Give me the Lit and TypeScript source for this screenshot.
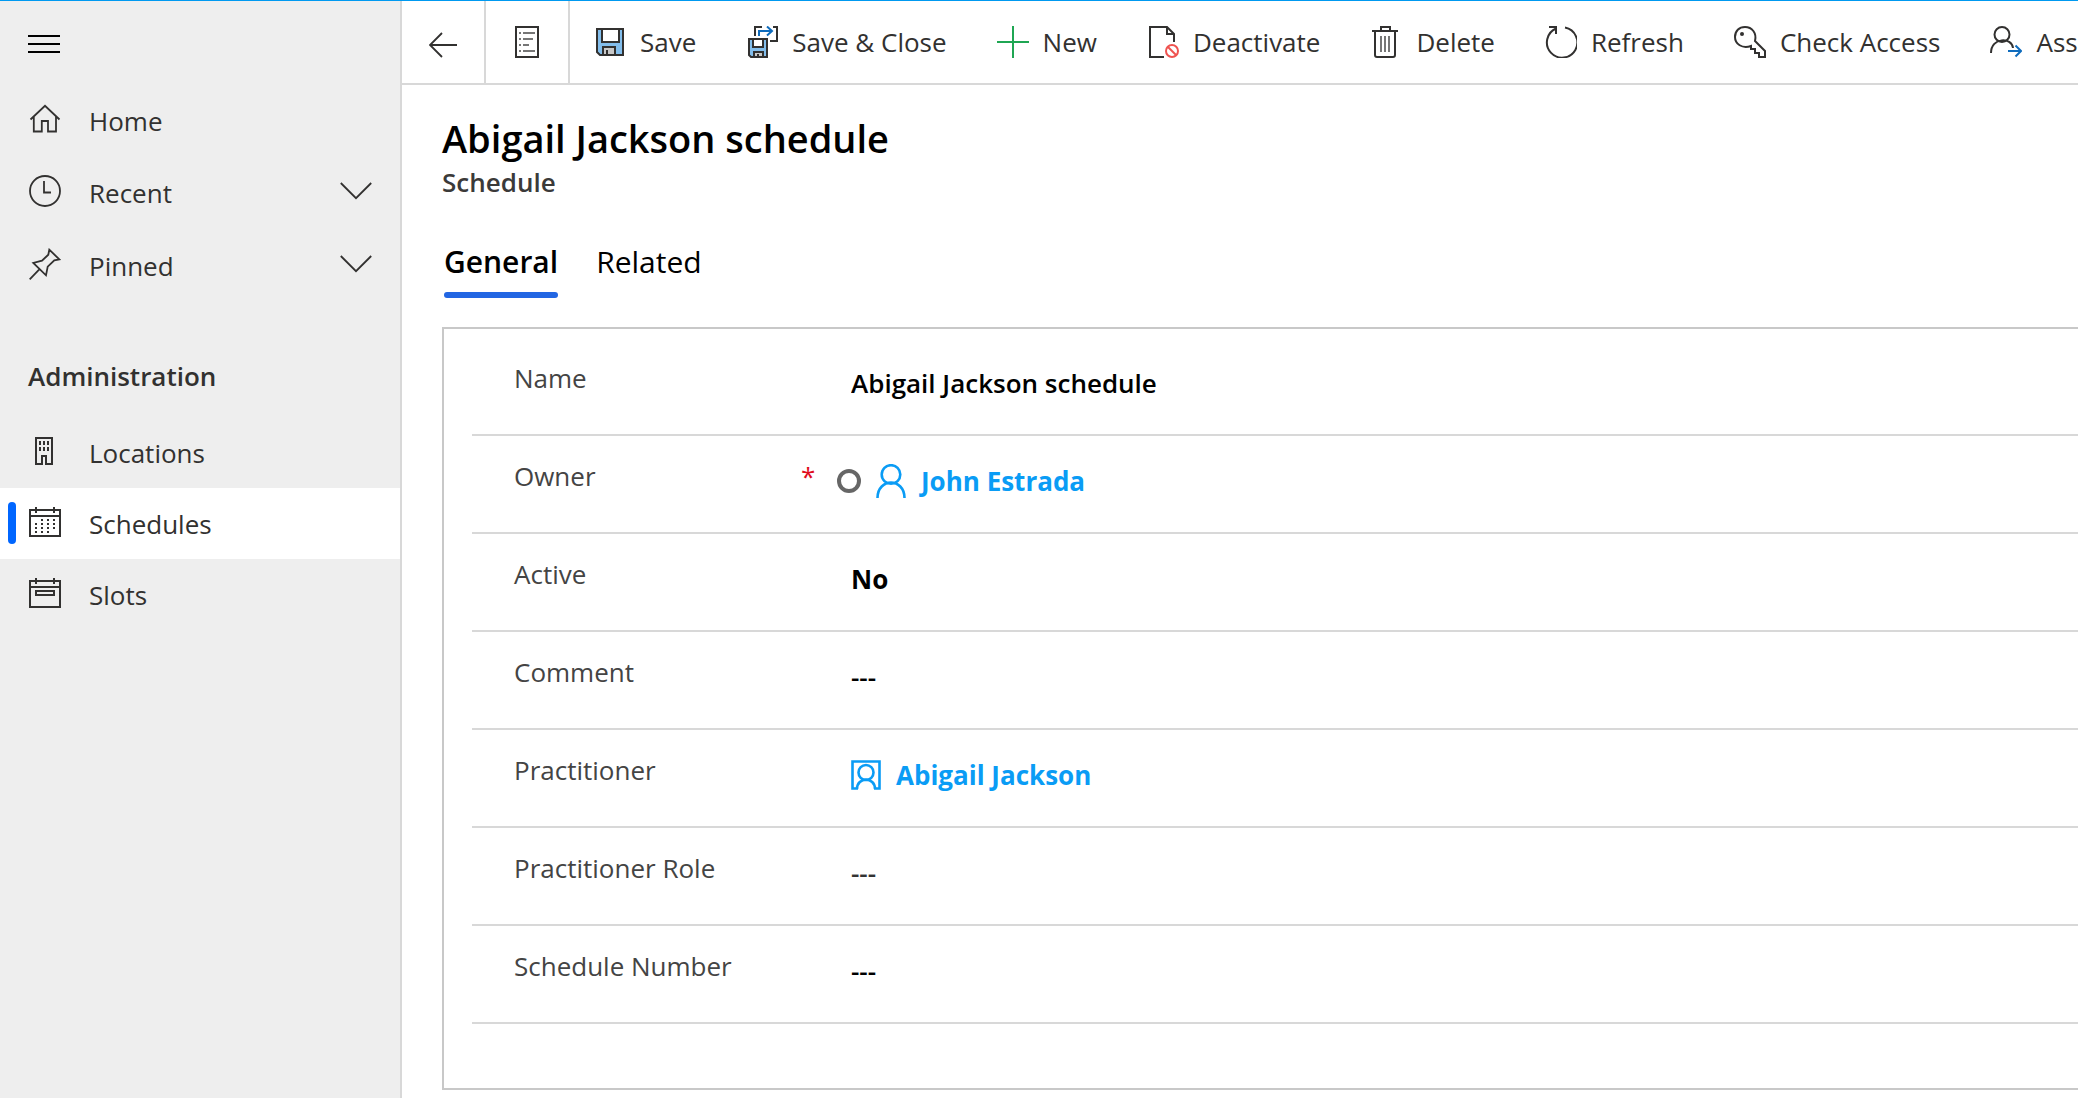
import { LitElement, html, svg, css } from "lit";
import { customElement } from "lit/decorators.js";
import { classMap } from "lit/directives/class-map.js";

const stroked = (w: number, h: number, body: unknown, sw = 2) => html`<svg
  width=${w} height=${h} viewBox="0 0 ${w} ${h}" fill="none" stroke="currentColor"
  stroke-width=${sw} aria-hidden="true">${body}</svg>`;

const calendarFrame = svg`<rect x="1" y="4" width="30" height="26"/><path d="M1 10H31M7 1V7M25 1V7"/>`;
const floppy = svg`
  <path d="M3 3H29V29H6L3 26Z" fill="#83beec"/>
  <rect x="8" y="3" width="17" height="13" fill="#fff"/>
  <path d="M9 29V21H21V29Z" fill="#c8c8c8"/><path d="M13 29V24"/>`;

const icons = {
  menu: stroked(32, 18, svg`<path d="M0 1H32M0 9H32M0 17H32"/>`),
  home: stroked(32, 32, svg`<path d="M1.5 16.5L16 2.8L30.5 16.5M4.8 13.5V28.5H12.8V18H19V28.5H27V13.5"/>`, 1.8),
  recent: stroked(32, 32, svg`<circle cx="16" cy="16" r="15"/><path d="M15 6V17.5H22"/>`, 1.8),
  pin: stroked(32, 32, svg`<path d="M.7 31.3L10.3 21.3M20.3 1.7L30.3 11.3L25.3 12.3L18.7 18.7L17 27.3L4.3 15L13 12.7L19.3 6.7Z"/>`, 1.8),
  building: stroked(32, 32, svg`<path d="M7 3H23V29H17V21H13V29H7Z"/><path d="M11 6v4M15 6v4M19 6v4M11 12v4M15 12v4M19 12v4"/>`),
  calendar: stroked(32, 32, svg`${calendarFrame}<path stroke-dasharray="2 4" d="M12 14H26M6 18H26M6 22H26M6 26H20"/>`),
  slot: stroked(32, 32, svg`${calendarFrame}<rect x="7" y="14" width="18" height="4"/>`),
  chevron: stroked(32, 18, svg`<path d="M.8 1L16 16.2L31.2 1"/>`, 1.8),
  back: stroked(28, 32, svg`<path d="M1 19H28M13 7L1 19L13 31"/>`, 1.8),
  form: stroked(24, 32, svg`<rect x="1" y="1" width="22" height="30"/><path stroke="#767676" d="M4 7h2M8 7h12M4 13h2M8 13h10M4 19h2M8 19h6M4 25h2M8 25h12"/>`),
  save: stroked(32, 32, floppy),
  saveClose: stroked(32, 32, svg`
    <path d="M3 13H21V31H5L3 29Z" fill="#83beec"/>
    <rect x="7" y="13" width="10" height="8" fill="#fff"/><path d="M8 31V26H17V31Z" fill="#c8c8c8"/><path d="M12 31V28"/>
    <path d="M9 10V1H16M27 1H31V15H24"/><path stroke="#0f6cbd" d="M13 10V5H26M21 0.5L26 5L21 9.5"/>`),
  add: stroked(32, 32, svg`<path stroke="#1fa653" d="M16 0V32M0 16H32"/>`),
  deactivate: stroked(32, 32, svg`
    <path d="M17 31H3V1H20L27 8V16M20 1V8H27"/>
    <g stroke="#ef5350"><circle cx="25" cy="25" r="6"/><path d="M21 21L29 29"/></g>`),
  trash: stroked(32, 32, svg`
    <path d="M2 5H28M11 5V1H20V5M5 5V29Q5 31 7 31H23Q25 31 25 29V5"/>
    <path stroke="#767676" d="M11 10V26M15 10V26M19 10V26"/>`),
  refresh: stroked(32, 32, svg`<path d="M20 1.500A15.200 15.200 0 1 1 11 2.500M4 1H11V8"/>`),
  key: stroked(32, 32, svg`
    <path d="M21 15L31 25V31H25V27H21V23H17V20C8 23 1 18 1 11C1 5 5 1 11 1C18 1 23 7 21 15Z"/>
    <circle cx="8" cy="8" r="2" fill="currentColor" stroke="none"/>`),
  assign: stroked(32, 32, svg`
    <circle cx="12" cy="8.500" r="7.500"/><path d="M1 27C1 11 22 11 23 22"/>
    <path stroke="#0f6cbd" d="M18 25H31M25.500 19.500L31 25L25.500 30.500"/>`),
  presence: stroked(24, 24, svg`<circle cx="12" cy="12" r="10"/>`, 4),
  person: stroked(30, 34, svg`<circle cx="15" cy="10.500" r="9.300"/><path d="M1.500 34C1.500 13.500 28.500 13.500 28.500 34"/>`, 2.6),
  contact: stroked(30, 30, svg`<path d="M7 28.500H1.500V1.500H28.500V28.500H23"/><circle cx="15" cy="12.500" r="7.500"/><path d="M6 29C6 16.500 24 16.500 24 29"/>`, 2.6),
};

type Icon = keyof typeof icons;

interface NavItem { label: string; icon: Icon; expandable?: boolean; active?: boolean }
interface Field { id: string; label: string; value: string; kind: "text" | "choice" | "lookup"; icon?: Icon; required?: boolean; muted?: boolean }

const primaryNav: NavItem[] = [
  { label: "Home", icon: "home" },
  { label: "Recent", icon: "recent", expandable: true },
  { label: "Pinned", icon: "pin", expandable: true },
];
const adminNav: NavItem[] = [
  { label: "Locations", icon: "building" },
  { label: "Schedules", icon: "calendar", active: true },
  { label: "Slots", icon: "slot" },
];
const commands: { label: string; icon: Icon }[] = [
  { label: "Save", icon: "save" },
  { label: "Save & Close", icon: "saveClose" },
  { label: "New", icon: "add" },
  { label: "Deactivate", icon: "deactivate" },
  { label: "Delete", icon: "trash" },
  { label: "Refresh", icon: "refresh" },
  { label: "Check Access", icon: "key" },
  { label: "Assign", icon: "assign" },
];
const fields: Field[] = [
  { id: "name", label: "Name", value: "Abigail Jackson schedule", kind: "text" },
  { id: "owner", label: "Owner", value: "John Estrada", kind: "lookup", icon: "person", required: true },
  { id: "active", label: "Active", value: "No", kind: "choice" },
  { id: "comment", label: "Comment", value: "---", kind: "text" },
  { id: "practitioner", label: "Practitioner", value: "Abigail Jackson", kind: "lookup", icon: "contact" },
  { id: "role", label: "Practitioner Role", value: "---", kind: "text", muted: true },
  { id: "number", label: "Schedule Number", value: "---", kind: "text" },
];

const base = css`
  :host { display: block; }
  * { box-sizing: border-box; }
  svg { display: block; flex: none; }
  button { font: inherit; color: inherit; background: none; border: 0; padding: 0; cursor: pointer; }
  a { color: inherit; text-decoration: none; }
`;

@customElement("site-map")
class SiteMap extends LitElement {
  static styles = [base, css`
    .nav { height: 100%; background: #eee; border-right: 2px solid #d8d8d8; color: #323130; }
    .menu { display: block; padding: 34px 28px 32px; color: #000; }
    .list { list-style: none; margin: 0; padding: 0; }
    .link { position: relative; display: flex; align-items: center; gap: 28px; height: 71px; width: 100%; padding: 0 28px 0 29px; text-align: left; }
    .link svg { margin-bottom: 4px; }
    .expandable { height: 73px; }
    .label { flex: 1; }
    .active { background: #fff; }
    .active::before { content: ""; position: absolute; left: 8px; top: 14px; bottom: 15px; width: 8px; border-radius: 4px; background: #06f; }
    .heading { margin: 0; padding: 56px 28px 23px; font-size: 26px; line-height: 36px; font-weight: 600; }
  `];

  item(n: NavItem) {
    const body = html`${icons[n.icon]}<span class="label">${n.label}</span>`;
    return html`<li>${n.expandable
      ? html`<button class="link expandable" aria-expanded="false">${body}${icons.chevron}</button>`
      : html`<a class=${classMap({ link: true, active: !!n.active })} href="#">${body}</a>`}</li>`;
  }

  render() {
    return html`<nav class="nav">
      <button class="menu" aria-label="Site map">${icons.menu}</button>
      <ul class="list">${primaryNav.map((n) => this.item(n))}</ul>
      <h2 class="heading">Administration</h2>
      <ul class="list">${adminNav.map((n) => this.item(n))}</ul>
    </nav>`;
  }
}

@customElement("command-bar")
class CommandBar extends LitElement {
  static styles = [base, css`
    .bar { display: flex; height: 84px; border-bottom: 2px solid #d8d8d8; color: #323130; overflow: hidden; }
    .square { display: flex; align-items: center; justify-content: center; flex: none; width: 84px; border-right: 2px solid #d8d8d8; }
    .commands { display: flex; gap: 50px; padding: 0 24px; }
    .command { display: flex; align-items: center; gap: 14px; flex: none; white-space: nowrap; }
  `];

  render() {
    return html`<header class="bar">
      <button class="square" aria-label="Back">${icons.back}</button>
      <button class="square" aria-label="Form">${icons.form}</button>
      <div class="commands">
        ${commands.map((c) => html`<button class="command">${icons[c.icon]}<span>${c.label}</span></button>`)}
      </div>
    </header>`;
  }
}

@customElement("record-form")
class RecordForm extends LitElement {
  static styles = [base, css`
    .page { padding: 29px 0 8px 40px; }
    .title { margin: 0; font-size: 38px; line-height: 48px; font-weight: 600; color: #000; }
    .entity { margin: 0; font-size: 26px; line-height: 40px; font-weight: 600; color: #3b3a39; }
    .tabs { display: flex; align-items: flex-start; gap: 38px; margin-top: 38px; padding-left: 2px; font-size: 30px; line-height: 44px; color: #000; }
    .selected { font-weight: 600; }
    .selected::after { content: ""; display: block; height: 6px; margin-top: 8px; border-radius: 3px; background: #2266e3; }
    .panel { margin-top: 29px; padding: 9px 0 64px 28px; border: 2px solid #c8c8c8; border-right: 0; }
    .field { display: grid; grid-template-columns: 284px 36px 1fr; height: 98px; padding: 22px 0 0 42px; border-bottom: 2px solid #d8d8d8; line-height: 36px; }
    .name { color: #444; }
    .required { color: #e00b1c; padding-left: 3px; }
    .value { display: flex; align-items: center; gap: 15px; height: 36px; margin-top: 5px; padding-left: 17px; font-weight: 600; color: #000; }
    .lookup { display: flex; align-items: center; gap: 15px; color: #0a9cf5; font-weight: 700; }
    .owned { padding-left: 3px; color: #666; }
    .input { flex: 1; height: 36px; margin: 0; padding: 0; border: 0; background: none; font: inherit; color: inherit; appearance: none; }
    .choice { font-weight: 700; }
    .muted { color: #333; }
  `];

  control(f: Field) {
    if (f.kind === "lookup") return html`${f.required ? icons.presence : ""}<a id=${f.id} class="lookup" href="#">${icons[f.icon!]}<span>${f.value}</span></a>`;
    if (f.kind === "choice") return html`<select id=${f.id} class="input choice"><option>${f.value}</option><option>Yes</option></select>`;
    return html`<input id=${f.id} class=${classMap({ input: true, muted: !!f.muted })} .value=${f.value} />`;
  }

  render() {
    return html`<main class="page">
      <h1 class="title">Abigail Jackson schedule</h1>
      <p class="entity">Schedule</p>
      <div class="tabs" role="tablist">
        <button class="selected" role="tab" aria-selected="true">General</button>
        <button role="tab" aria-selected="false">Related</button>
      </div>
      <section class="panel">
        ${fields.map((f) => html`<div class="field">
          <label class="name" for=${f.id}>${f.label}</label>
          <span class="required">${f.required ? "*" : ""}</span>
          <div class=${classMap({ value: true, owned: !!f.required })}>${this.control(f)}</div>
        </div>`)}
      </section>
    </main>`;
  }
}

@customElement("app-root")
class AppRoot extends LitElement {
  static styles = [base, css`
    .app { display: grid; grid-template-columns: 402px minmax(0, 1fr); min-height: 100vh; border-top: 1px solid #0099f0; background: #fff; font-family: "Open Sans", "Noto Sans", sans-serif; font-size: 26px; line-height: 36px; }
  `];

  render() {
    return html`<div class="app">
      <site-map></site-map>
      <div><command-bar></command-bar><record-form></record-form></div>
    </div>`;
  }
}
